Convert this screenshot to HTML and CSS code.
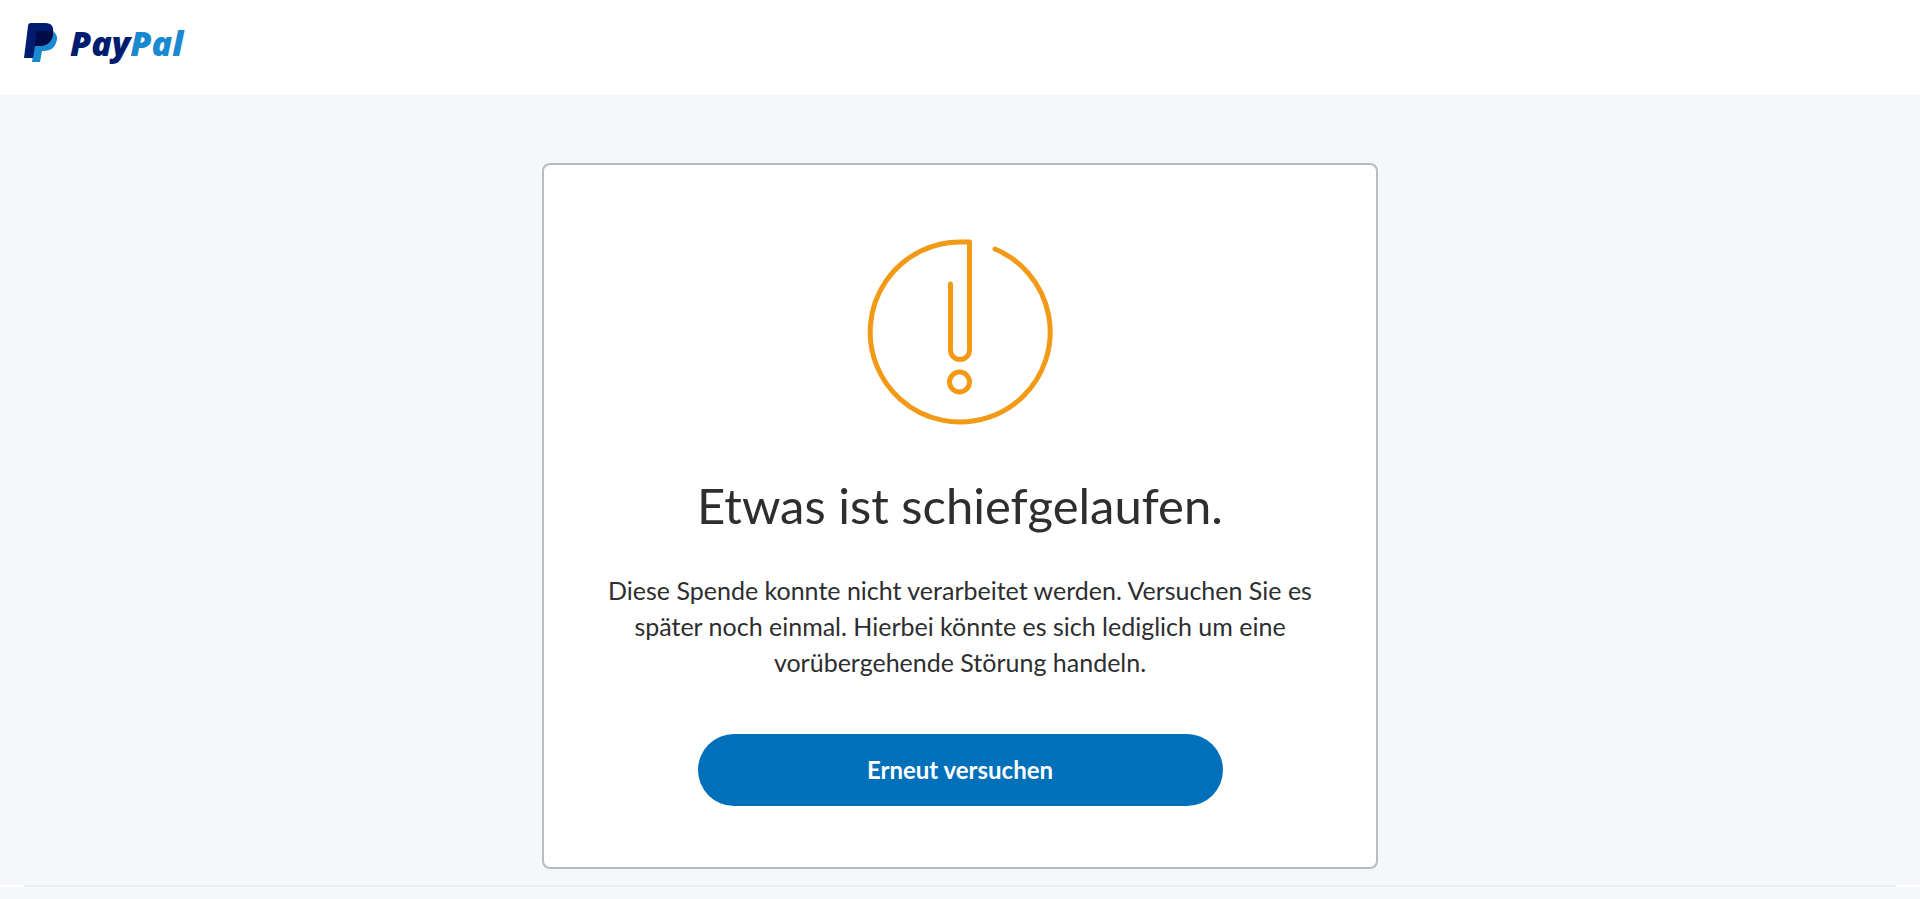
FILE: index.html
```html
<!DOCTYPE html>
<html lang="de">
<head>
<meta charset="utf-8">
<meta name="viewport" content="width=device-width, initial-scale=1">
<title>PayPal</title>
<link rel="stylesheet" href="styles.css">
</head>
<body>
<header class="header">
  <a class="logo" href="#" aria-label="PayPal">
    <svg class="logo-mark" viewBox="0 0 34 40" aria-hidden="true">
      <path fill="#1a8ad0" d="M12 8h17c4 3 5 7 3 12-2 6-7 8-13 8h-1l-2 11H8z"/>
      <path fill="#001c70" d="M7 0h14c7 0 9 4 8 10-1 9-6 13-14 13h-4L9 35H0L4 3c0-2 1-3 3-3z"/>
      <path fill="#000c47" d="M14 8h15c1 9-5 15-14 15h-4l1-13c0-1 1-2 2-2z"/>
    </svg>
    <span class="logo-name"><span class="logo-pay">Pay</span><span class="logo-pal">Pal</span></span>
  </a>
</header>
<main class="main">
  <section class="card">
    <svg class="warning" viewBox="0 0 186 186" aria-hidden="true">
      <path d="M128 10A90 90 0 1 1 94 3h8.500v108a9.500 9.500 0 0 1-19 0V45"/>
      <circle cx="92.500" cy="143" r="10"/>
    </svg>
    <h1 class="title">Etwas ist schiefgelaufen.</h1>
    <p class="message">Diese Spende konnte nicht verarbeitet werden. Versuchen Sie es später noch einmal. Hierbei könnte es sich lediglich um eine vorübergehende Störung handeln.</p>
    <button class="retry" type="button">Erneut versuchen</button>
  </section>
</main>
<footer class="footer"><hr class="rule"></footer>
</body>
</html>
```
FILE: styles.css
```css
* {
  box-sizing: border-box;
}

body {
  margin: 0;
  min-height: 100vh;
  display: flex;
  flex-direction: column;
  background: #f5f7fb;
  color: #2c2e2f;
  font-family: Lato, "Noto Sans", sans-serif;
}

.header {
  padding: 23px 24px 32px;
  background: #fff;
}

.logo {
  display: flex;
  align-items: center;
  gap: 12px;
  width: fit-content;
  height: 40px;
  text-decoration: none;
}

.logo-mark {
  width: 34px;
  height: 40px;
}

.logo-name {
  font-family: "Open Sans", Lato, sans-serif;
  font-size: 34px;
  font-weight: 800;
  font-style: italic;
  line-height: 40px;
}

.logo-pay {
  color: #001c70;
}

.logo-pal {
  color: #1a8ad0;
}

.main {
  padding: 68px 24px 16px;
}

.card {
  display: flex;
  flex-direction: column;
  align-items: center;
  max-width: 836px;
  margin: 0 auto;
  padding: 74px 64px 61px;
  border: 2px solid #b7bcbf;
  border-radius: 8px;
  background: #fff;
  text-align: center;
}

.warning {
  width: 186px;
  height: 186px;
  fill: none;
  stroke: #f29a16;
  stroke-width: 5;
  stroke-linecap: round;
  stroke-linejoin: round;
}

.title {
  margin: 48px 0 35px;
  font-size: 49px;
  font-weight: 400;
  line-height: 64px;
}

.message {
  margin: 0 0 54px;
  font-size: 25px;
  line-height: 36px;
}

.retry {
  width: 100%;
  max-width: 525px;
  padding: 18px 24px;
  border: 0;
  border-radius: 36px;
  background: #0070ba;
  color: #fff;
  font: 700 24px/36px Lato, "Noto Sans", sans-serif;
}

.footer {
  flex: 1;
  padding: 0 24px;
  border-top: 2px solid #fff;
}

.rule {
  margin: -2px 0 0;
  border: 0;
  border-top: 2px solid #eaecf1;
}
```
